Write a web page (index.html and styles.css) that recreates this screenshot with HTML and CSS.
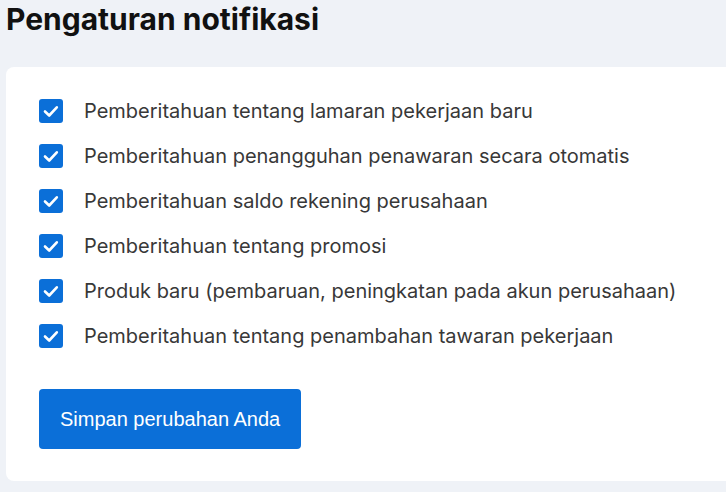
FILE: index.html
```html
<!DOCTYPE html>
<html lang="id">
<head>
<meta charset="utf-8">
<link rel="stylesheet" href="styles.css">
</head>
<body>
<h1 class="title">Pengaturan notifikasi</h1>
<div class="card">
  <ul class="list">
    <li class="item"><span class="box"><svg viewBox="0 0 24 24" width="24" height="24"><path d="M6 12.5l4.2 4 7.6-8.2" fill="none" stroke="#fff" stroke-width="2.6" stroke-linecap="round" stroke-linejoin="round"/></svg></span><span class="label">Pemberitahuan tentang lamaran pekerjaan baru</span></li>
    <li class="item"><span class="box"><svg viewBox="0 0 24 24" width="24" height="24"><path d="M6 12.5l4.2 4 7.6-8.2" fill="none" stroke="#fff" stroke-width="2.6" stroke-linecap="round" stroke-linejoin="round"/></svg></span><span class="label">Pemberitahuan penangguhan penawaran secara otomatis</span></li>
    <li class="item"><span class="box"><svg viewBox="0 0 24 24" width="24" height="24"><path d="M6 12.5l4.2 4 7.6-8.2" fill="none" stroke="#fff" stroke-width="2.6" stroke-linecap="round" stroke-linejoin="round"/></svg></span><span class="label">Pemberitahuan saldo rekening perusahaan</span></li>
    <li class="item"><span class="box"><svg viewBox="0 0 24 24" width="24" height="24"><path d="M6 12.5l4.2 4 7.6-8.2" fill="none" stroke="#fff" stroke-width="2.6" stroke-linecap="round" stroke-linejoin="round"/></svg></span><span class="label">Pemberitahuan tentang promosi</span></li>
    <li class="item"><span class="box"><svg viewBox="0 0 24 24" width="24" height="24"><path d="M6 12.5l4.2 4 7.6-8.2" fill="none" stroke="#fff" stroke-width="2.6" stroke-linecap="round" stroke-linejoin="round"/></svg></span><span class="label">Produk baru (pembaruan, peningkatan pada akun perusahaan)</span></li>
    <li class="item"><span class="box"><svg viewBox="0 0 24 24" width="24" height="24"><path d="M6 12.5l4.2 4 7.6-8.2" fill="none" stroke="#fff" stroke-width="2.6" stroke-linecap="round" stroke-linejoin="round"/></svg></span><span class="label">Pemberitahuan tentang penambahan tawaran pekerjaan</span></li>
  </ul>
  <button class="btn">Simpan perubahan Anda</button>
</div>
</body>
</html>
```
FILE: styles.css
```css
html, body {
  margin: 0;
  padding: 0;
  background: #eff2f7;
}
body {
  padding: 0 0 0 6px;
  font-family: Inter, "Noto Sans", sans-serif;
  overflow: hidden;
}
.title {
  margin: 0;
  height: 67px;
  font-size: 30px;
  line-height: 38px;
  font-weight: 700;
  color: #111;
}
.card {
  background: #fff;
  border-radius: 8px 0 0 8px;
  padding: 32px 33px;
  width: 800px;
  height: 350px;
}
.list {
  list-style: none;
  margin: 0;
  padding: 0;
  display: flex;
  flex-direction: column;
  gap: 21px;
}
.item {
  display: flex;
  align-items: center;
  gap: 21px;
  height: 24px;
}
.box {
  width: 24px;
  height: 24px;
  border-radius: 3px;
  background: #0b6fd8;
  display: flex;
  flex: none;
}
.label {
  font-size: 20px;
  color: #383838;
  white-space: nowrap;
}
.btn {
  margin-top: 41px;
  height: 60px;
  padding: 0 21px;
  background: #0b6fd8;
  color: #fff;
  border: none;
  border-radius: 4px;
  font-family: "Liberation Sans", Arial, sans-serif;
  font-size: 20px;
}
```
